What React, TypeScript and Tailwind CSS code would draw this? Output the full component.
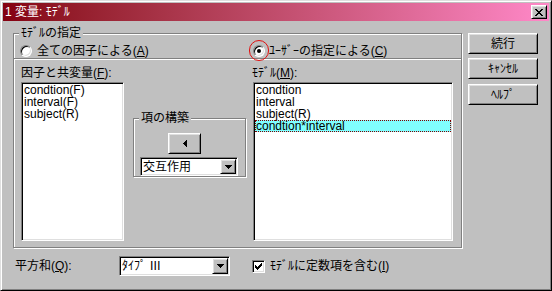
const font = "font-['Liberation_Sans','Noto_Sans_CJK_JP',sans-serif] text-[12px] leading-[12px] text-black"
const raised = "border border-t-white border-l-white border-r-black border-b-black shadow-[inset_1px_1px_0_#dfdfdf,inset_-1px_-1px_0_#808080]"
const sunken = "border border-t-[#808080] border-l-[#808080] border-r-white border-b-white shadow-[inset_1px_1px_0_#000,inset_-1px_-1px_0_#dfdfdf]"
const etched = "border border-[#808080] shadow-[inset_1px_1px_0_#fff,1px_1px_0_#fff]"

function Key({ k }: { k: string }) {
  return (
    <>
      (<span className="underline underline-offset-[1px]">{k}</span>)
    </>
  )
}

function Button({ children, className = "" }: { children: React.ReactNode; className?: string }) {
  return (
    <div className={`${raised} bg-[#c0c0c0] flex items-center justify-center ${className}`}>
      {children}
    </div>
  )
}

function Combo({ text, className = "" }: { text: string; className?: string }) {
  return (
    <div className={`${sunken} bg-white flex items-stretch justify-between p-[1px] ${className}`}>
      <span className="pl-[1px] flex items-center">{text}</span>
      <div className={`${raised} bg-[#c0c0c0] w-[16px] flex items-center justify-center`}>
        <svg width="7" height="4" viewBox="0 0 7 4" shapeRendering="crispEdges">
          <path d="M0 0h7v1H0z M1 1h5v1H1z M2 2h3v1H2z M3 3h1v1H3z" fill="#000" />
        </svg>
      </div>
    </div>
  )
}

function Radio({ checked }: { checked?: boolean }) {
  return (
    <span className={`w-[12px] h-[12px] rounded-full bg-white ${sunken} flex items-center justify-center shrink-0`}>
      {checked && <span className="w-[4px] h-[4px] rounded-full bg-black" />}
    </span>
  )
}

function ListBox({ items, width, selected }: { items: string[]; width: string; selected?: number }) {
  return (
    <div className={`${sunken} bg-white ${width} h-[159px] p-[1px]`}>
      {items.map((t, i) => (
        <div
          key={t}
          className={`h-[12px] pl-[1px] whitespace-nowrap ${
            i === selected ? "bg-[#80ffff] outline-1 outline-dotted outline-[#800000] -outline-offset-1" : ""
          }`}
        >
          {t}
        </div>
      ))}
    </div>
  )
}

export default function App() {
  return (
    <div
      className={`${font} w-[552px] h-[291px] bg-[#c0c0c0] border border-t-[#dfdfdf] border-l-[#dfdfdf] border-r-black border-b-black shadow-[inset_1px_1px_0_#fff,inset_-1px_-1px_0_#808080] p-[2px] flex flex-col`}
    >
      {/* title bar */}
      <div className="h-[18px] bg-gradient-to-r from-[#840010] to-[#ff88c8] flex items-center justify-between pl-[2px] pr-[2px]">
        <span className="text-white">1 変量: ﾓﾃﾞﾙ</span>
        <Button className="w-[16px] h-[14px]">
          <svg width="8" height="7" viewBox="0 0 8 7" shapeRendering="crispEdges">
            <path
              d="M0 0h2v1H0z M6 0h2v1H6z M1 1h2v1H1z M5 1h2v1H5z M2 2h4v1H2z M3 3h2v1H3z M2 4h4v1H2z M1 5h2v1H1z M5 5h2v1H5z M0 6h2v1H0z M6 6h2v1H6z"
              fill="#000"
            />
          </svg>
        </Button>
      </div>

      <div className="flex gap-[6px] pl-[10px] pt-[12px]">
        {/* left column */}
        <div className="flex flex-col">
          <div className={`relative ${etched} w-[449px] h-[215px] flex flex-col`}>
            <span className="absolute top-[-7px] left-[5px] px-[2px] bg-[#c0c0c0]">ﾓﾃﾞﾙの指定</span>

            <div className="h-[24px] flex items-end pb-[1px] pl-[6px]">
              <div className="w-[233px] flex items-center gap-[5px]">
                <Radio />
                <span>
                  全ての因子による<Key k="A" />
                </span>
              </div>
              <div className="flex items-center gap-[4px]">
                <span className="relative">
                  <Radio checked />
                  <span className="absolute -left-[4px] -top-[5px] w-[20px] h-[21px] rounded-full border border-[#e01010]" />
                </span>
                <span>
                  ﾕｰｻﾞｰの指定による<Key k="C" />
                </span>
              </div>
            </div>

            <div className="h-[2px] border-t border-[#808080] bg-white" />

            <div className="flex pt-[7px] pl-[7px]">
              <div className="flex flex-col gap-[3px]">
                <span>
                  因子と共変量<Key k="F" />:
                </span>
                <ListBox width="w-[103px]" items={["condtion(F)", "interval(F)", "subject(R)"]} />
              </div>

              <div className={`relative ${etched} w-[113px] h-[59px] ml-[9px] mt-[51px] flex flex-col`}>
                <span className="absolute top-[-7px] left-[5px] px-[2px] bg-[#c0c0c0]">項の構築</span>
                <Button className="w-[33px] h-[21px] ml-[34px] mt-[14px]">
                  <svg width="4" height="7" viewBox="0 0 4 7" shapeRendering="crispEdges">
                    <path d="M3 0h1v7H3z M2 1h1v5H2z M1 2h1v3H1z M0 3h1v1H0z" fill="#000" />
                  </svg>
                </Button>
                <Combo text="交互作用" className="w-[98px] h-[19px] ml-[6px] mt-[3px]" />
              </div>

              <div className="flex flex-col gap-[3px] ml-[7px]">
                <span className="-ml-[1px]">
                  ﾓﾃﾞﾙ<Key k="M" />:
                </span>
                <ListBox
                  width="w-[200px]"
                  items={["condtion", "interval", "subject(R)", "condtion*interval"]}
                  selected={3}
                />
              </div>
            </div>
          </div>

          {/* bottom row */}
          <div className="flex items-center mt-[8px] pl-[2px]">
            <span className="w-[104px]">
              平方和<Key k="Q" />:
            </span>
            <Combo text="ﾀｲﾌﾟ Ⅲ" className="w-[111px] h-[20px]" />
            <span className={`${sunken} bg-white w-[13px] h-[13px] ml-[22px] flex items-center justify-center`}>
              <svg width="7" height="7" viewBox="0 0 7 7" shapeRendering="crispEdges">
                <path
                  d="M6 0h1v1H6z M5 1h2v1H5z M0 2h1v1H0z M4 2h3v1H4z M0 3h2v1H0z M3 3h3v1H3z M0 4h5v1H0z M1 5h3v1H1z M2 6h1v1H2z"
                  fill="#000"
                />
              </svg>
            </span>
            <span className="ml-[5px]">
              ﾓﾃﾞﾙに定数項を含む<Key k="I" />
            </span>
          </div>
        </div>

        {/* buttons */}
        <div className="flex flex-col">
          <Button className="w-[70px] h-[21px]">続行</Button>
          <Button className="w-[70px] h-[21px] mt-[4px]">ｷｬﾝｾﾙ</Button>
          <Button className="w-[70px] h-[21px] mt-[5px]">ﾍﾙﾌﾟ</Button>
        </div>
      </div>
    </div>
  )
}
